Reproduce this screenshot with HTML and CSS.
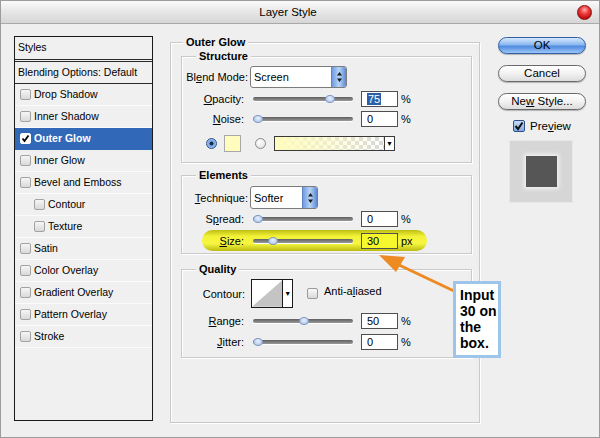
FILE: index.html
```html
<!DOCTYPE html>
<html>

<head>
    <title>Layer Style</title>
    <meta charset=utf-8>
    <link rel="stylesheet" href="styles.css">
</head>

<body>
    <div id="dialog">
        <div id="titlebar">
            <span class="title">Layer Style</span>
            <span class="close"></span>
        </div>

        <div id="content">
            <div id="styles">
                <div class="head">Styles</div>
                <div class="blend">Blending Options: Default</div>
                <div class="item"><span class="chk"></span>Drop Shadow</div>
                <div class="item"><span class="chk"></span>Inner Shadow</div>
                <div class="item sel"><span class="chk on"><svg width="9" height="9" viewBox="0 0 9 9"><path d="M1.5 4.5 L3.5 7 L7.5 1.5" fill="none" stroke="#000" stroke-width="1.8"/></svg></span>Outer Glow</div>
                <div class="item"><span class="chk"></span>Inner Glow</div>
                <div class="item"><span class="chk"></span>Bevel and Emboss</div>
                <div class="item sub"><span class="chk"></span>Contour</div>
                <div class="item sub"><span class="chk"></span>Texture</div>
                <div class="item"><span class="chk"></span>Satin</div>
                <div class="item"><span class="chk"></span>Color Overlay</div>
                <div class="item"><span class="chk"></span>Gradient Overlay</div>
                <div class="item"><span class="chk"></span>Pattern Overlay</div>
                <div class="item"><span class="chk"></span>Stroke</div>
            </div>

            <fieldset class="outer">
                <legend>Outer Glow</legend>

                <fieldset class="group structure">
                    <legend>Structure</legend>
                    <div class="row selrow">
                        <label class="lbl">Bl<u>e</u>nd Mode:</label>
                        <div class="select blendsel">Screen<span class="spin"><svg width="7" height="12" viewBox="0 0 7 12"><path d="M3.5 1 L6 4.5 L1 4.5 Z M3.5 11 L6 7.5 L1 7.5 Z" fill="#1a1a1a"/></svg></span></div>
                    </div>
                    <div class="row slide r-opacity">
                        <label class="lbl"><u>O</u>pacity:</label>
                        <div class="track"><span class="thumb" style="left:72px"></span></div>
                        <span class="num"><span class="hl">75</span></span>
                        <span class="unit">%</span>
                    </div>
                    <div class="row slide r-noise">
                        <label class="lbl"><u>N</u>oise:</label>
                        <div class="track"><span class="thumb" style="left:0px"></span></div>
                        <span class="num">0</span>
                        <span class="unit">%</span>
                    </div>
                    <div class="row colors">
                        <span class="radio on"></span>
                        <span class="swatch"></span>
                        <span class="radio"></span>
                        <div class="gradient"><span class="grad"></span><span class="drop">&#9660;</span></div>
                    </div>
                </fieldset>

                <fieldset class="group elements">
                    <legend>Elements</legend>
                    <div class="row techrow">
                        <label class="lbl"><u>T</u>echnique:</label>
                        <div class="select techsel">Softer<span class="spin"><svg width="7" height="12" viewBox="0 0 7 12"><path d="M3.5 1 L6 4.5 L1 4.5 Z M3.5 11 L6 7.5 L1 7.5 Z" fill="#1a1a1a"/></svg></span></div>
                    </div>
                    <div class="row slide r-spread">
                        <label class="lbl">S<u>p</u>read:</label>
                        <div class="track"><span class="thumb" style="left:0px"></span></div>
                        <span class="num">0</span>
                        <span class="unit">%</span>
                    </div>
                    <div class="row slide pill">
                        <label class="lbl"><u>S</u>ize:</label>
                        <div class="track"><span class="thumb" style="left:15px"></span></div>
                        <span class="num yellow">30</span>
                        <span class="unit">px</span>
                    </div>
                </fieldset>

                <fieldset class="group quality">
                    <legend>Quality</legend>
                    <div class="row controw">
                        <label class="lbl">Contour:</label>
                        <div class="contour">
                            <svg class="curve" width="31" height="27" viewBox="0 0 31 27"><path d="M31 0 L31 27 L0 27 Z" fill="#c4c4c4"/></svg>
                            <span class="drop">&#9660;</span>
                        </div>
                        <span class="cbox"></span>
                        <span class="aa">Anti-a<u>l</u>iased</span>
                    </div>
                    <div class="row slide r-range">
                        <label class="lbl"><u>R</u>ange:</label>
                        <div class="track"><span class="thumb" style="left:46px"></span></div>
                        <span class="num">50</span>
                        <span class="unit">%</span>
                    </div>
                    <div class="row slide r-jitter">
                        <label class="lbl"><u>J</u>itter:</label>
                        <div class="track"><span class="thumb" style="left:0px"></span></div>
                        <span class="num">0</span>
                        <span class="unit">%</span>
                    </div>
                </fieldset>
            </fieldset>

            <div id="buttons">
                <div class="butt ok">OK</div>
                <div class="butt">Cancel</div>
                <div class="butt">Ne<u>w</u> Style...</div>
                <div class="preview">
                    <span class="pchk"><svg width="10" height="10" viewBox="0 0 10 10"><path d="M1.5 5 L4 8 L8.5 1.5" fill="none" stroke="#111" stroke-width="2"/></svg></span>
                    Pre<u>v</u>iew
                </div>
                <div class="swatchbox"><span class="sq"></span></div>
            </div>
        </div>

        <svg id="arrow" width="90" height="45" viewBox="370 250 90 45">
            <line x1="397" y1="264" x2="454" y2="291" stroke="#ee8a22" stroke-width="3"/>
            <path d="M379 255 L405 257 L396 272 Z" fill="#ee8a22"/>
        </svg>
        <div id="note">Input<br>30 on<br>the<br>box.</div>
    </div>
</body>

</html>
```

FILE: styles.css
```css
body {
    margin: 0;
    font-family: "Liberation Sans", Arial, sans-serif;
    font-size: 11px;
    color: #000;
    background: #fff;
}

#dialog {
    width: 600px;
    height: 438px;
    box-sizing: border-box;
    border: 1px solid #9c9c9c;
    background: #efefef;
    position: relative;
    overflow: hidden;
}

#titlebar {
    height: 22px;
    border-bottom: 1px solid #a9a9a9;
    background: linear-gradient(#fafafa, #e6e6e6 50%, #d6d6d6);
    display: flex;
    align-items: center;
}

.title {
    flex: 1;
    text-align: center;
    font-size: 11.5px;
}

.close {
    width: 13px;
    height: 13px;
    margin: 0 7px 0 2px;
    border-radius: 50%;
    border: 1px solid #8a1010;
    background: radial-gradient(circle at 50% 30%, #ffb0b0 0, #f04040 35%, #b80808 80%);
}

#content {
    display: flex;
    padding: 12px 0 0 13px;
}

/* left list */
#styles {
    width: 139px;
    height: 385px;
    box-sizing: border-box;
    border: 1px solid #1a1a1a;
    background: #f0f0f0;
    font-size: 10.5px;
}

.head {
    height: 22px;
    line-height: 21px;
    padding-left: 3px;
    border-bottom: 3px double #2a2a2a;
}

.blend {
    height: 21px;
    line-height: 20px;
    padding-left: 3px;
    border-bottom: 1px solid #2a2a2a;
}

.item {
    height: 21px;
    border-bottom: 1px solid #fbfbfb;
    display: flex;
    align-items: center;
    padding-left: 5px;
    padding-bottom: 1px;
    box-sizing: border-box;
    height: 22px;
}

.item.sub {
    padding-left: 19px;
}

.item.sel {
    background: #3169b8;
    color: #fff;
    font-weight: bold;
    border-bottom-color: #3169b8;
}

.chk {
    width: 9px;
    height: 9px;
    margin-right: 3px;
    border: 1px solid #a3a3a3;
    border-radius: 2px;
    background: linear-gradient(#f6f6f6, #d9d9d9);
    display: flex;
    align-items: center;
    justify-content: center;
}

.chk.on {
    background: #fff;
    border-color: #fff;
}

/* middle */
fieldset {
    margin: 0;
    padding: 0;
    border: 1px solid #c9c9c9;
    box-shadow: inset 1px 1px 0 #fff, 1px 1px 0 #fff;
}

legend {
    font-weight: bold;
    line-height: 13px;
    padding: 0 3px;
    background: #efefef;
}

.outer {
    width: 310px;
    height: 387px;
    box-sizing: border-box;
    margin-left: 17px;
    padding: 1px 7px 0 10px;
}

.outer > legend {
    margin-left: 2px;
}

.group > legend {
    margin-left: 14px;
}

.structure {
    padding-bottom: 10px;
}

.elements {
    margin-top: 6px;
    padding-bottom: 2px;
}

.quality {
    margin-top: 9px;
    padding-bottom: 7px;
}

.row {
    display: flex;
    align-items: center;
}

.lbl {
    width: 66px;
    text-align: right;
    margin-right: 2px;
}

.selrow {
    margin-top: 3px;
    height: 22px;
}

.techrow {
    margin-top: 4px;
    height: 23px;
}

.select {
    height: 100%;
    box-sizing: border-box;
    border: 1px solid #7c7c7c;
    border-radius: 3px;
    background: #fff;
    padding-left: 3px;
    display: flex;
    align-items: center;
}

.blendsel {
    width: 97px;
}

.techsel {
    width: 68px;
}

.spin {
    margin-left: auto;
    width: 14px;
    height: 100%;
    border-left: 1px solid #5f86c4;
    border-radius: 0 2px 2px 0;
    background: linear-gradient(90deg, #6f9be0, #b8d4f6 50%, #5a8ad6);
    display: flex;
    align-items: center;
    justify-content: center;
}

.slide {
    height: 16px;
}

.slide .lbl {
    width: 62px;
    margin-right: 9px;
}

.r-opacity {
    margin-top: 3px;
}

.r-noise {
    margin-top: 4px;
}

.r-spread {
    margin-top: 2px;
}

.r-range {
    margin-top: 5px;
}

.r-jitter {
    margin-top: 5px;
}

.track {
    width: 100px;
    height: 4px;
    border-radius: 2px;
    background: linear-gradient(#5e5e5e, #9a9a9a);
    box-shadow: 0 1px 0 #fff;
    position: relative;
    margin-right: 8px;
}

.thumb {
    position: absolute;
    top: -2px;
    width: 8px;
    height: 6px;
    border-radius: 50%;
    border: 1px solid #7d98c4;
    background: radial-gradient(circle at 50% 35%, #eaf2ff, #9fbbe4);
}

.num {
    width: 37px;
    height: 16px;
    box-sizing: border-box;
    border: 1px solid #4e4e4e;
    background: #fff;
    padding-left: 5px;
    line-height: 14px;
}

.hl {
    background: #2d5fa8;
    color: #fff;
    padding: 0 1px;
}

.num.yellow {
    background: #f7f72e;
}

.unit {
    margin-left: 3px;
}

.pill {
    height: 21px;
    margin: 3px 0 0 20px;
    width: 225px;
    border-radius: 11px;
    background: linear-gradient(#bebe12, #f2f238 30%, #f6f640 65%, #baba10);
}

.pill .lbl {
    width: 42px;
}

.colors {
    margin-top: 7px;
    height: 18px;
    padding-left: 24px;
}

.radio {
    width: 9px;
    height: 9px;
    border-radius: 50%;
    border: 1px solid #8a8a8a;
    background: radial-gradient(circle at 40% 35%, #fff, #dcdcdc);
}

.radio.on {
    border-color: #2a4f8c;
    background: radial-gradient(circle, #1c2c48 0, #1c2c48 28%, #6e9ee0 34%, #c8dcf6);
}

.swatch {
    width: 15px;
    height: 15px;
    margin: 0 14px 0 7px;
    border: 1px solid #a8a8a8;
    background: #fffcbe;
}

.gradient {
    margin-left: 8px;
    width: 121px;
    height: 15px;
    box-sizing: border-box;
    border: 1px solid #3a3a3a;
    display: flex;
}

.grad {
    flex: 1;
    background:
        linear-gradient(90deg, #fffcbe, rgba(255, 252, 190, 0.5) 55%, rgba(255, 252, 190, 0)),
        repeating-conic-gradient(#d8d8d8 0 25%, #fff 0 50%) 0 0 / 8px 8px;
}

.drop {
    width: 9px;
    border-left: 1px solid #3a3a3a;
    background: #fff;
    font-size: 7px;
    line-height: 13px;
    text-align: center;
}

.controw {
    margin-top: 3px;
    height: 29px;
}

.controw .lbl {
    width: 63px;
    margin-right: 6px;
}

.contour {
    width: 42px;
    height: 29px;
    box-sizing: border-box;
    border: 1px solid #1a1a1a;
    background: #fff;
    display: flex;
}

.contour .drop {
    line-height: 27px;
    border-left-color: #1a1a1a;
}

.curve {
    display: block;
}

.cbox {
    width: 9px;
    height: 9px;
    margin: 0 6px 0 14px;
    border: 1px solid #9a9a9a;
    border-radius: 2px;
    background: linear-gradient(#f8f8f8, #dadada);
}

.aa {
    align-self: flex-start;
    margin-top: 6px;
}

/* right column */
#buttons {
    margin-left: 18px;
    width: 88px;
    display: flex;
    flex-direction: column;
}

.butt {
    height: 17px;
    box-sizing: border-box;
    border: 1px solid #6a6a6a;
    border-radius: 9px;
    background: linear-gradient(#ffffff, #f2f2f2 50%, #dcdcdc);
    box-shadow: 0 1px 1px rgba(0, 0, 0, 0.25);
    text-align: center;
    line-height: 15px;
    font-size: 11.5px;
    margin-bottom: 11px;
}

.butt.ok {
    margin-top: 1px;
    border-color: #2f5ea6;
    background: linear-gradient(#d6e8fc, #8ab8f0 45%, #4f8be0 55%, #9cc6f6);
}

.preview {
    display: flex;
    align-items: center;
    padding-left: 15px;
    margin-top: -1px;
    height: 12px;
    font-size: 11.5px;
}

.pchk {
    width: 10px;
    height: 10px;
    margin-right: 5px;
    border: 1px solid #2c4f8a;
    border-radius: 2px;
    background: linear-gradient(#c8dcf6, #84aae0);
    display: flex;
    align-items: center;
    justify-content: center;
}

.swatchbox {
    width: 64px;
    height: 63px;
    margin: 8px 0 0 11px;
    box-sizing: border-box;
    border: 1px solid #e8e8e8;
    background: #d6d6d6;
    display: flex;
    align-items: center;
    justify-content: center;
}

.sq {
    width: 31px;
    height: 31px;
    background: #565656;
    box-shadow: 0 0 4px 2px #f2f2f2;
}

/* annotation over the dialog */
#arrow {
    position: absolute;
    left: 369px;
    top: 249px;
}

#note {
    position: absolute;
    left: 452px;
    top: 280px;
    width: 48px;
    height: 77px;
    box-sizing: border-box;
    border: 3px solid #9dc4ea;
    background: #fff;
    padding: 3px 0 0 4px;
    font-size: 14px;
    font-weight: bold;
    line-height: 16px;
}
```
